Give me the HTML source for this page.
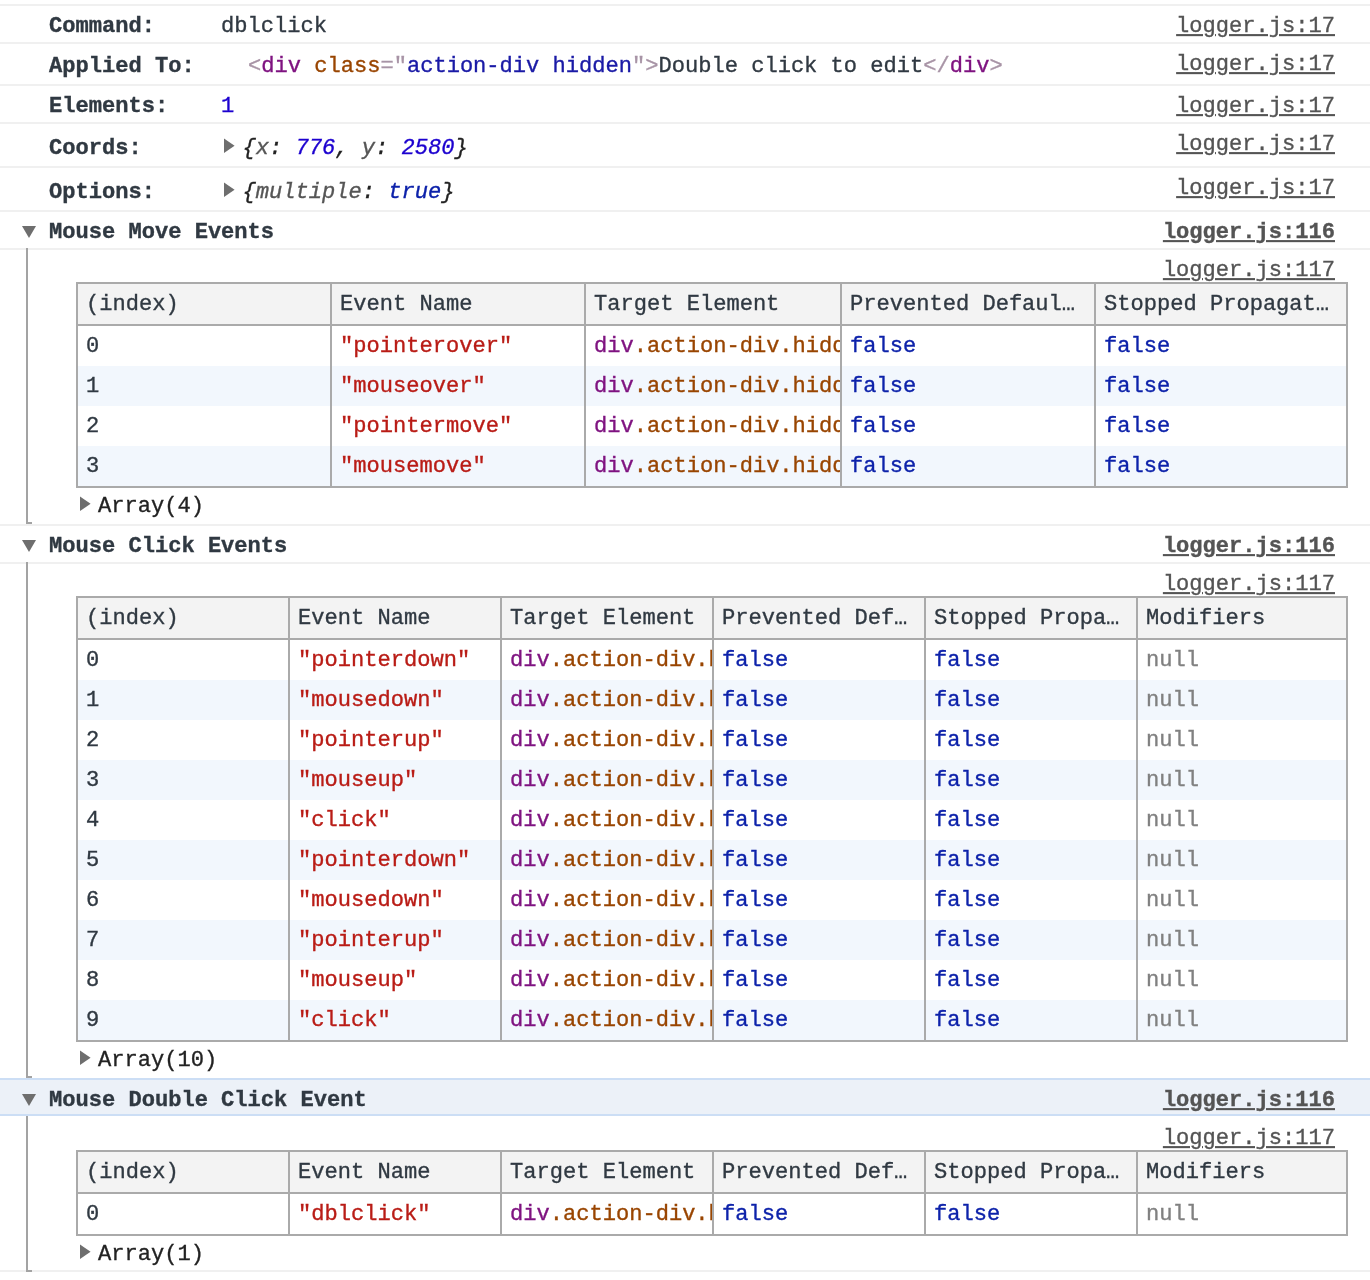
<!DOCTYPE html>
<html><head><meta charset="utf-8"><style>
html,body{margin:0;padding:0;background:#fff;}
body{width:1370px;height:1280px;overflow:hidden;position:relative;-webkit-text-stroke:0.35px;font-family:"Liberation Mono",monospace;font-size:22.07px;color:#303942;}
#w{position:absolute;left:0;top:0;width:1370px;height:1280px;will-change:transform}
.r{position:absolute;display:block}
.t{position:absolute;white-space:pre;line-height:40px;transform:scaleY(1.04);transform-origin:0 25px;}
.b{font-weight:bold;-webkit-text-stroke:0.35px}
.i{font-style:italic;color:#222}
.lk{position:absolute;white-space:pre;line-height:40px;color:#545454;text-decoration:underline;text-decoration-thickness:2px;text-underline-offset:2px;transform:scaleY(1.04);transform-origin:0 25px;}
.cell{position:absolute;white-space:pre;line-height:40px;overflow:hidden;box-sizing:border-box;padding-left:8px;transform:scaleY(1.04);transform-origin:0 25px;}
</style></head><body><div id="w">
<div class="r" style="left:0px;top:4px;width:1370px;height:2px;background:#f0f0f0"></div>
<div class="r" style="left:0px;top:42px;width:1370px;height:2px;background:#f0f0f0"></div>
<div class="r" style="left:0px;top:84px;width:1370px;height:2px;background:#f0f0f0"></div>
<div class="r" style="left:0px;top:122px;width:1370px;height:2px;background:#f0f0f0"></div>
<div class="r" style="left:0px;top:166px;width:1370px;height:2px;background:#f0f0f0"></div>
<div class="r" style="left:0px;top:210px;width:1370px;height:2px;background:#f0f0f0"></div>
<div class="r" style="left:0px;top:248px;width:1370px;height:2px;background:#f0f0f0"></div>
<div class="r" style="left:0px;top:524px;width:1370px;height:2px;background:#f0f0f0"></div>
<div class="r" style="left:0px;top:562px;width:1370px;height:2px;background:#f0f0f0"></div>
<div class="r" style="left:0px;top:1270px;width:1370px;height:2px;background:#f0f0f0"></div>
<div class="t b" style="left:49px;top:7px;">Command:</div>
<div class="t" style="left:221px;top:7px;">dblclick</div>
<div class="lk" style="right:35px;top:7px">logger.js:17</div>
<div class="t b" style="left:49px;top:47px;">Applied To:</div>
<div class="t" style="left:248px;top:47px;"><span style="color:#a894a6;">&lt;</span><span style="color:#7f1380;">div</span> <span style="color:#994500;">class</span><span style="color:#a894a6;">=&quot;</span><span style="color:#1a1aa6;">action-div hidden</span><span style="color:#a894a6;">&quot;&gt;</span>Double click to edit<span style="color:#a894a6;">&lt;/</span><span style="color:#7f1380;">div</span><span style="color:#a894a6;">&gt;</span></div>
<div class="lk" style="right:35px;top:45px">logger.js:17</div>
<div class="t b" style="left:49px;top:87px;">Elements:</div>
<div class="t" style="left:221px;top:87px;"><span style="color:#1c00cf;">1</span></div>
<div class="lk" style="right:35px;top:87px">logger.js:17</div>
<div class="t b" style="left:49px;top:129px;">Coords:</div>
<svg class="r" style="left:224px;top:138px" width="12" height="16" viewBox="0 0 12 16"><path d="M0 0.5 L10.6 7.8 L0 15.1 Z" fill="#6e6e6e"/></svg>
<div class="t i" style="left:242.5px;top:129px;">{<span style="color:#565656;">x</span>: <span style="color:#1c00cf;">776</span>, <span style="color:#565656;">y</span>: <span style="color:#1c00cf;">2580</span>}</div>
<div class="lk" style="right:35px;top:125px">logger.js:17</div>
<div class="t b" style="left:49px;top:173px;">Options:</div>
<svg class="r" style="left:224px;top:182px" width="12" height="16" viewBox="0 0 12 16"><path d="M0 0.5 L10.6 7.8 L0 15.1 Z" fill="#6e6e6e"/></svg>
<div class="t i" style="left:242.5px;top:173px;">{<span style="color:#565656;">multiple</span>: <span style="color:#0d22aa;">true</span>}</div>
<div class="lk" style="right:35px;top:169px">logger.js:17</div>
<svg class="r" style="left:22px;top:226px" width="14" height="12" viewBox="0 0 14 12"><path d="M0 0 L14 0 L7 12 Z" fill="#6e6e6e"/></svg>
<div class="t b" style="left:49px;top:213px;">Mouse Move Events</div>
<div class="lk b" style="right:35px;top:213px">logger.js:116</div>
<div class="r" style="left:26px;top:248px;width:2px;height:276px;background:#a3a3a3"></div>
<div class="r" style="left:26px;top:522px;width:6px;height:2px;background:#a3a3a3"></div>
<div class="lk" style="right:35px;top:251px">logger.js:117</div>
<div class="r" style="left:76px;top:282px;width:1272px;height:206px;background:#aaaaaa"></div>
<div class="r" style="left:78px;top:284px;width:1268px;height:40px;background:#f3f3f3"></div>
<div class="r" style="left:78px;top:326px;width:1268px;height:40px;background:#ffffff"></div>
<div class="r" style="left:78px;top:366px;width:1268px;height:40px;background:#f2f7fd"></div>
<div class="r" style="left:78px;top:406px;width:1268px;height:40px;background:#ffffff"></div>
<div class="r" style="left:78px;top:446px;width:1268px;height:40px;background:#f2f7fd"></div>
<div class="r" style="left:330px;top:282px;width:2px;height:206px;background:#aaaaaa"></div>
<div class="r" style="left:584px;top:282px;width:2px;height:206px;background:#aaaaaa"></div>
<div class="r" style="left:840px;top:282px;width:2px;height:206px;background:#aaaaaa"></div>
<div class="r" style="left:1094px;top:282px;width:2px;height:206px;background:#aaaaaa"></div>
<div class="cell" style="left:78px;top:285px;width:252px">(index)</div>
<div class="cell" style="left:332px;top:285px;width:252px">Event Name</div>
<div class="cell" style="left:586px;top:285px;width:254px">Target Element</div>
<div class="cell" style="left:842px;top:285px;width:252px">Prevented Defaul…</div>
<div class="cell" style="left:1096px;top:285px;width:250px">Stopped Propagat…</div>
<div class="cell" style="left:78px;top:327px;width:252px">0</div>
<div class="cell" style="left:332px;top:327px;width:252px"><span style="color:#b91c16;">"pointerover"</span></div>
<div class="cell" style="left:586px;top:327px;width:254px"><span style="color:#7f1380;">div</span><span style="color:#994500;">.action-div.hidden</span></div>
<div class="cell" style="left:842px;top:327px;width:252px"><span style="color:#0d22aa;">false</span></div>
<div class="cell" style="left:1096px;top:327px;width:250px"><span style="color:#0d22aa;">false</span></div>
<div class="cell" style="left:78px;top:367px;width:252px">1</div>
<div class="cell" style="left:332px;top:367px;width:252px"><span style="color:#b91c16;">"mouseover"</span></div>
<div class="cell" style="left:586px;top:367px;width:254px"><span style="color:#7f1380;">div</span><span style="color:#994500;">.action-div.hidden</span></div>
<div class="cell" style="left:842px;top:367px;width:252px"><span style="color:#0d22aa;">false</span></div>
<div class="cell" style="left:1096px;top:367px;width:250px"><span style="color:#0d22aa;">false</span></div>
<div class="cell" style="left:78px;top:407px;width:252px">2</div>
<div class="cell" style="left:332px;top:407px;width:252px"><span style="color:#b91c16;">"pointermove"</span></div>
<div class="cell" style="left:586px;top:407px;width:254px"><span style="color:#7f1380;">div</span><span style="color:#994500;">.action-div.hidden</span></div>
<div class="cell" style="left:842px;top:407px;width:252px"><span style="color:#0d22aa;">false</span></div>
<div class="cell" style="left:1096px;top:407px;width:250px"><span style="color:#0d22aa;">false</span></div>
<div class="cell" style="left:78px;top:447px;width:252px">3</div>
<div class="cell" style="left:332px;top:447px;width:252px"><span style="color:#b91c16;">"mousemove"</span></div>
<div class="cell" style="left:586px;top:447px;width:254px"><span style="color:#7f1380;">div</span><span style="color:#994500;">.action-div.hidden</span></div>
<div class="cell" style="left:842px;top:447px;width:252px"><span style="color:#0d22aa;">false</span></div>
<div class="cell" style="left:1096px;top:447px;width:250px"><span style="color:#0d22aa;">false</span></div>
<svg class="r" style="left:80px;top:496px" width="12" height="16" viewBox="0 0 12 16"><path d="M0 0.5 L10.6 7.8 L0 15.1 Z" fill="#6e6e6e"/></svg>
<div class="t" style="left:98px;top:487px;color:#222">Array(4)</div>
<svg class="r" style="left:22px;top:540px" width="14" height="12" viewBox="0 0 14 12"><path d="M0 0 L14 0 L7 12 Z" fill="#6e6e6e"/></svg>
<div class="t b" style="left:49px;top:527px;">Mouse Click Events</div>
<div class="lk b" style="right:35px;top:527px">logger.js:116</div>
<div class="r" style="left:26px;top:562px;width:2px;height:516px;background:#a3a3a3"></div>
<div class="r" style="left:26px;top:1076px;width:6px;height:2px;background:#a3a3a3"></div>
<div class="lk" style="right:35px;top:565px">logger.js:117</div>
<div class="r" style="left:76px;top:596px;width:1272px;height:446px;background:#aaaaaa"></div>
<div class="r" style="left:78px;top:598px;width:1268px;height:40px;background:#f3f3f3"></div>
<div class="r" style="left:78px;top:640px;width:1268px;height:40px;background:#ffffff"></div>
<div class="r" style="left:78px;top:680px;width:1268px;height:40px;background:#f2f7fd"></div>
<div class="r" style="left:78px;top:720px;width:1268px;height:40px;background:#ffffff"></div>
<div class="r" style="left:78px;top:760px;width:1268px;height:40px;background:#f2f7fd"></div>
<div class="r" style="left:78px;top:800px;width:1268px;height:40px;background:#ffffff"></div>
<div class="r" style="left:78px;top:840px;width:1268px;height:40px;background:#f2f7fd"></div>
<div class="r" style="left:78px;top:880px;width:1268px;height:40px;background:#ffffff"></div>
<div class="r" style="left:78px;top:920px;width:1268px;height:40px;background:#f2f7fd"></div>
<div class="r" style="left:78px;top:960px;width:1268px;height:40px;background:#ffffff"></div>
<div class="r" style="left:78px;top:1000px;width:1268px;height:40px;background:#f2f7fd"></div>
<div class="r" style="left:288px;top:596px;width:2px;height:446px;background:#aaaaaa"></div>
<div class="r" style="left:500px;top:596px;width:2px;height:446px;background:#aaaaaa"></div>
<div class="r" style="left:712px;top:596px;width:2px;height:446px;background:#aaaaaa"></div>
<div class="r" style="left:924px;top:596px;width:2px;height:446px;background:#aaaaaa"></div>
<div class="r" style="left:1136px;top:596px;width:2px;height:446px;background:#aaaaaa"></div>
<div class="cell" style="left:78px;top:599px;width:210px">(index)</div>
<div class="cell" style="left:290px;top:599px;width:210px">Event Name</div>
<div class="cell" style="left:502px;top:599px;width:210px">Target Element</div>
<div class="cell" style="left:714px;top:599px;width:210px">Prevented Def…</div>
<div class="cell" style="left:926px;top:599px;width:210px">Stopped Propa…</div>
<div class="cell" style="left:1138px;top:599px;width:208px">Modifiers</div>
<div class="cell" style="left:78px;top:641px;width:210px">0</div>
<div class="cell" style="left:290px;top:641px;width:210px"><span style="color:#b91c16;">"pointerdown"</span></div>
<div class="cell" style="left:502px;top:641px;width:210px"><span style="color:#7f1380;">div</span><span style="color:#994500;">.action-div.hidden</span></div>
<div class="cell" style="left:714px;top:641px;width:210px"><span style="color:#0d22aa;">false</span></div>
<div class="cell" style="left:926px;top:641px;width:210px"><span style="color:#0d22aa;">false</span></div>
<div class="cell" style="left:1138px;top:641px;width:208px"><span style="color:#808080;">null</span></div>
<div class="cell" style="left:78px;top:681px;width:210px">1</div>
<div class="cell" style="left:290px;top:681px;width:210px"><span style="color:#b91c16;">"mousedown"</span></div>
<div class="cell" style="left:502px;top:681px;width:210px"><span style="color:#7f1380;">div</span><span style="color:#994500;">.action-div.hidden</span></div>
<div class="cell" style="left:714px;top:681px;width:210px"><span style="color:#0d22aa;">false</span></div>
<div class="cell" style="left:926px;top:681px;width:210px"><span style="color:#0d22aa;">false</span></div>
<div class="cell" style="left:1138px;top:681px;width:208px"><span style="color:#808080;">null</span></div>
<div class="cell" style="left:78px;top:721px;width:210px">2</div>
<div class="cell" style="left:290px;top:721px;width:210px"><span style="color:#b91c16;">"pointerup"</span></div>
<div class="cell" style="left:502px;top:721px;width:210px"><span style="color:#7f1380;">div</span><span style="color:#994500;">.action-div.hidden</span></div>
<div class="cell" style="left:714px;top:721px;width:210px"><span style="color:#0d22aa;">false</span></div>
<div class="cell" style="left:926px;top:721px;width:210px"><span style="color:#0d22aa;">false</span></div>
<div class="cell" style="left:1138px;top:721px;width:208px"><span style="color:#808080;">null</span></div>
<div class="cell" style="left:78px;top:761px;width:210px">3</div>
<div class="cell" style="left:290px;top:761px;width:210px"><span style="color:#b91c16;">"mouseup"</span></div>
<div class="cell" style="left:502px;top:761px;width:210px"><span style="color:#7f1380;">div</span><span style="color:#994500;">.action-div.hidden</span></div>
<div class="cell" style="left:714px;top:761px;width:210px"><span style="color:#0d22aa;">false</span></div>
<div class="cell" style="left:926px;top:761px;width:210px"><span style="color:#0d22aa;">false</span></div>
<div class="cell" style="left:1138px;top:761px;width:208px"><span style="color:#808080;">null</span></div>
<div class="cell" style="left:78px;top:801px;width:210px">4</div>
<div class="cell" style="left:290px;top:801px;width:210px"><span style="color:#b91c16;">"click"</span></div>
<div class="cell" style="left:502px;top:801px;width:210px"><span style="color:#7f1380;">div</span><span style="color:#994500;">.action-div.hidden</span></div>
<div class="cell" style="left:714px;top:801px;width:210px"><span style="color:#0d22aa;">false</span></div>
<div class="cell" style="left:926px;top:801px;width:210px"><span style="color:#0d22aa;">false</span></div>
<div class="cell" style="left:1138px;top:801px;width:208px"><span style="color:#808080;">null</span></div>
<div class="cell" style="left:78px;top:841px;width:210px">5</div>
<div class="cell" style="left:290px;top:841px;width:210px"><span style="color:#b91c16;">"pointerdown"</span></div>
<div class="cell" style="left:502px;top:841px;width:210px"><span style="color:#7f1380;">div</span><span style="color:#994500;">.action-div.hidden</span></div>
<div class="cell" style="left:714px;top:841px;width:210px"><span style="color:#0d22aa;">false</span></div>
<div class="cell" style="left:926px;top:841px;width:210px"><span style="color:#0d22aa;">false</span></div>
<div class="cell" style="left:1138px;top:841px;width:208px"><span style="color:#808080;">null</span></div>
<div class="cell" style="left:78px;top:881px;width:210px">6</div>
<div class="cell" style="left:290px;top:881px;width:210px"><span style="color:#b91c16;">"mousedown"</span></div>
<div class="cell" style="left:502px;top:881px;width:210px"><span style="color:#7f1380;">div</span><span style="color:#994500;">.action-div.hidden</span></div>
<div class="cell" style="left:714px;top:881px;width:210px"><span style="color:#0d22aa;">false</span></div>
<div class="cell" style="left:926px;top:881px;width:210px"><span style="color:#0d22aa;">false</span></div>
<div class="cell" style="left:1138px;top:881px;width:208px"><span style="color:#808080;">null</span></div>
<div class="cell" style="left:78px;top:921px;width:210px">7</div>
<div class="cell" style="left:290px;top:921px;width:210px"><span style="color:#b91c16;">"pointerup"</span></div>
<div class="cell" style="left:502px;top:921px;width:210px"><span style="color:#7f1380;">div</span><span style="color:#994500;">.action-div.hidden</span></div>
<div class="cell" style="left:714px;top:921px;width:210px"><span style="color:#0d22aa;">false</span></div>
<div class="cell" style="left:926px;top:921px;width:210px"><span style="color:#0d22aa;">false</span></div>
<div class="cell" style="left:1138px;top:921px;width:208px"><span style="color:#808080;">null</span></div>
<div class="cell" style="left:78px;top:961px;width:210px">8</div>
<div class="cell" style="left:290px;top:961px;width:210px"><span style="color:#b91c16;">"mouseup"</span></div>
<div class="cell" style="left:502px;top:961px;width:210px"><span style="color:#7f1380;">div</span><span style="color:#994500;">.action-div.hidden</span></div>
<div class="cell" style="left:714px;top:961px;width:210px"><span style="color:#0d22aa;">false</span></div>
<div class="cell" style="left:926px;top:961px;width:210px"><span style="color:#0d22aa;">false</span></div>
<div class="cell" style="left:1138px;top:961px;width:208px"><span style="color:#808080;">null</span></div>
<div class="cell" style="left:78px;top:1001px;width:210px">9</div>
<div class="cell" style="left:290px;top:1001px;width:210px"><span style="color:#b91c16;">"click"</span></div>
<div class="cell" style="left:502px;top:1001px;width:210px"><span style="color:#7f1380;">div</span><span style="color:#994500;">.action-div.hidden</span></div>
<div class="cell" style="left:714px;top:1001px;width:210px"><span style="color:#0d22aa;">false</span></div>
<div class="cell" style="left:926px;top:1001px;width:210px"><span style="color:#0d22aa;">false</span></div>
<div class="cell" style="left:1138px;top:1001px;width:208px"><span style="color:#808080;">null</span></div>
<svg class="r" style="left:80px;top:1050px" width="12" height="16" viewBox="0 0 12 16"><path d="M0 0.5 L10.6 7.8 L0 15.1 Z" fill="#6e6e6e"/></svg>
<div class="t" style="left:98px;top:1041px;color:#222">Array(10)</div>
<div class="r" style="left:0px;top:1078px;width:1370px;height:2px;background:#ccdef5"></div>
<div class="r" style="left:0px;top:1080px;width:1370px;height:34px;background:#ecf1f8"></div>
<div class="r" style="left:0px;top:1114px;width:1370px;height:2px;background:#ccdef5"></div>
<svg class="r" style="left:22px;top:1094px" width="14" height="12" viewBox="0 0 14 12"><path d="M0 0 L14 0 L7 12 Z" fill="#6e6e6e"/></svg>
<div class="t b" style="left:49px;top:1081px;">Mouse Double Click Event</div>
<div class="lk b" style="right:35px;top:1081px">logger.js:116</div>
<div class="r" style="left:26px;top:1116px;width:2px;height:156px;background:#a3a3a3"></div>
<div class="r" style="left:26px;top:1270px;width:6px;height:2px;background:#a3a3a3"></div>
<div class="lk" style="right:35px;top:1119px">logger.js:117</div>
<div class="r" style="left:76px;top:1150px;width:1272px;height:86px;background:#aaaaaa"></div>
<div class="r" style="left:78px;top:1152px;width:1268px;height:40px;background:#f3f3f3"></div>
<div class="r" style="left:78px;top:1194px;width:1268px;height:40px;background:#ffffff"></div>
<div class="r" style="left:288px;top:1150px;width:2px;height:86px;background:#aaaaaa"></div>
<div class="r" style="left:500px;top:1150px;width:2px;height:86px;background:#aaaaaa"></div>
<div class="r" style="left:712px;top:1150px;width:2px;height:86px;background:#aaaaaa"></div>
<div class="r" style="left:924px;top:1150px;width:2px;height:86px;background:#aaaaaa"></div>
<div class="r" style="left:1136px;top:1150px;width:2px;height:86px;background:#aaaaaa"></div>
<div class="cell" style="left:78px;top:1153px;width:210px">(index)</div>
<div class="cell" style="left:290px;top:1153px;width:210px">Event Name</div>
<div class="cell" style="left:502px;top:1153px;width:210px">Target Element</div>
<div class="cell" style="left:714px;top:1153px;width:210px">Prevented Def…</div>
<div class="cell" style="left:926px;top:1153px;width:210px">Stopped Propa…</div>
<div class="cell" style="left:1138px;top:1153px;width:208px">Modifiers</div>
<div class="cell" style="left:78px;top:1195px;width:210px">0</div>
<div class="cell" style="left:290px;top:1195px;width:210px"><span style="color:#b91c16;">"dblclick"</span></div>
<div class="cell" style="left:502px;top:1195px;width:210px"><span style="color:#7f1380;">div</span><span style="color:#994500;">.action-div.hidden</span></div>
<div class="cell" style="left:714px;top:1195px;width:210px"><span style="color:#0d22aa;">false</span></div>
<div class="cell" style="left:926px;top:1195px;width:210px"><span style="color:#0d22aa;">false</span></div>
<div class="cell" style="left:1138px;top:1195px;width:208px"><span style="color:#808080;">null</span></div>
<svg class="r" style="left:80px;top:1244px" width="12" height="16" viewBox="0 0 12 16"><path d="M0 0.5 L10.6 7.8 L0 15.1 Z" fill="#6e6e6e"/></svg>
<div class="t" style="left:98px;top:1235px;color:#222">Array(1)</div>
</div></body></html>
